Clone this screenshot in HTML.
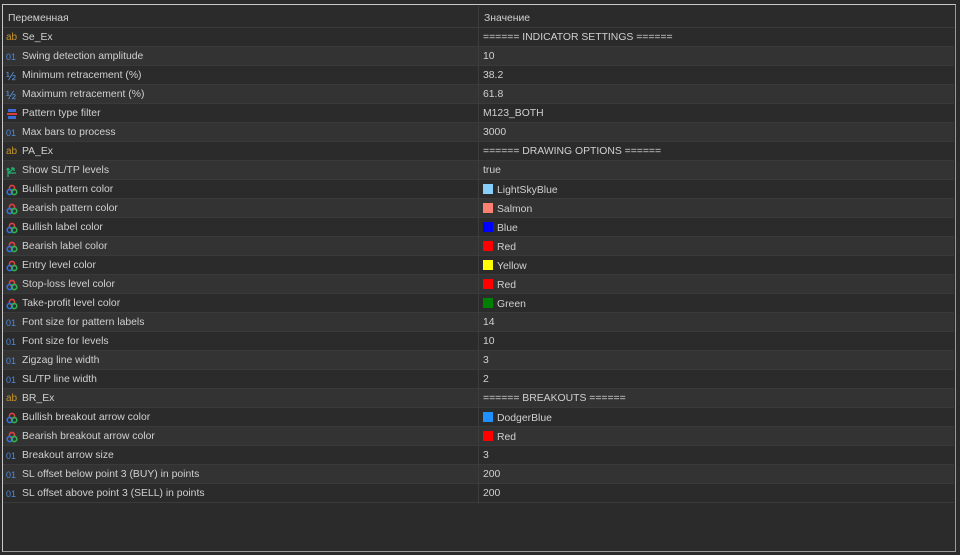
<!DOCTYPE html><html><head><meta charset="utf-8"><style>
body{margin:0;width:960px;height:555px;background:#2b2b2b;overflow:hidden;font-family:"Liberation Sans",sans-serif;font-size:10.4px;color:#d0d0d0}
.frame{position:absolute;left:2px;top:4px;width:952px;height:546px;border:1px solid #c8c8c8;border-right-color:#9a9a9a;border-bottom-color:#9a9a9a;background:#2b2b2b}
.hdr{position:absolute;left:3px;top:6px;width:951px;height:21px;background:#2b2b2b;border-bottom:1px solid #3c3c3c}
.hdr span{position:absolute;top:7px}
.row{position:absolute;left:3px;width:951px;height:18px;border-bottom:1px solid #3a3a3a}
.row.o{background:#333333}.row.e{background:#2b2b2b}
.n{position:absolute;left:19px;top:4px;white-space:nowrap}
.v{position:absolute;left:480px;top:4px;white-space:nowrap}
.ic{position:absolute;left:3px;top:4px;width:12px;height:12px;font-size:10px;line-height:12px}
.sw{display:inline-block;width:10px;height:10px;vertical-align:-1px;margin-right:4px}
.div{position:absolute;left:478px;top:6px;width:1px;height:498px;background:#3c3c3c}
</style></head><body>
<div class="frame"></div>
<div class="hdr"><span style="left:5px">Переменная</span><span style="left:481px">Значение</span></div>
<div id="rows"></div>
<div class="div"></div>
<script>
var ab='<span class="ic" style="color:#c8962a">ab</span>',
o1='<span class="ic" style="color:#4a8ae0;font-size:9px">01</span>',
hf='<span class="ic" style="color:#5b9ae8;font-size:12px">½</span>',
fl='<svg class="ic" viewBox="0 0 12 12"><rect x="2" y="1" width="8" height="3" fill="#3c6cd8"/><rect x="1" y="5" width="10" height="2" fill="#d84040"/><rect x="2" y="8" width="8" height="3" fill="#3c6cd8"/></svg>',
bo='<svg class="ic" viewBox="0 0 12 12"><path d="M2 12V3M2 3l-1.5 2M2 3l1.5 2M2 8L8 3M8 3H5M8 3v3M2 8h8" stroke="#20b070" stroke-width="1.3" fill="none"/></svg>',
co='<svg class="ic" viewBox="0 0 12 12"><circle cx="6" cy="4" r="2.6" fill="none" stroke="#e04040" stroke-width="1.6"/><circle cx="3.8" cy="8" r="2.6" fill="none" stroke="#3070e0" stroke-width="1.6"/><circle cx="8.2" cy="8" r="2.6" fill="none" stroke="#30b050" stroke-width="1.6"/></svg>';
var R=[[ab,'Se_Ex','====== INDICATOR SETTINGS ======'],[o1,'Swing detection amplitude','10'],[hf,'Minimum retracement (%)','38.2'],[hf,'Maximum retracement (%)','61.8'],[fl,'Pattern type filter','M123_BOTH'],[o1,'Max bars to process','3000'],[ab,'PA_Ex','====== DRAWING OPTIONS ======'],[bo,'Show SL/TP levels','true'],[co,'Bullish pattern color','LightSkyBlue','#87cefa'],[co,'Bearish pattern color','Salmon','#fa8072'],[co,'Bullish label color','Blue','#0000ff'],[co,'Bearish label color','Red','#ff0000'],[co,'Entry level color','Yellow','#ffff00'],[co,'Stop-loss level color','Red','#ff0000'],[co,'Take-profit level color','Green','#008000'],[o1,'Font size for pattern labels','14'],[o1,'Font size for levels','10'],[o1,'Zigzag line width','3'],[o1,'SL/TP line width','2'],[ab,'BR_Ex','====== BREAKOUTS ======'],[co,'Bullish breakout arrow color','DodgerBlue','#1e90ff'],[co,'Bearish breakout arrow color','Red','#ff0000'],[o1,'Breakout arrow size','3'],[o1,'SL offset below point 3 (BUY) in points','200'],[o1,'SL offset above point 3 (SELL) in points','200']];
var h='';R.forEach(function(r,i){h+='<div class="row '+(i%2?'o':'e')+'" style="top:'+(28+i*19)+'px">'+r[0]+'<span class="n">'+r[1]+'</span><span class="v">'+(r[3]?'<span class="sw" style="background:'+r[3]+'"></span>':'')+r[2]+'</span></div>'});
document.getElementById('rows').innerHTML=h;
</script>
</body></html>
